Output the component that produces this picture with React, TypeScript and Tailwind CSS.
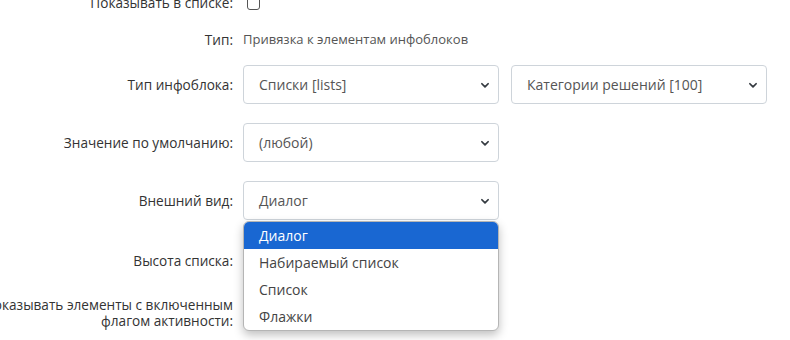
function Chevron() {
  return (
    <svg viewBox="0 0 16 16" className="h-[10px] w-[10px] shrink-0 text-[#343a40]" fill="none" stroke="currentColor" strokeWidth={2.8}>
      <path strokeLinecap="round" strokeLinejoin="round" d="M3 6l5 5 5-5" />
    </svg>
  )
}

function Select({ value }: { value: string }) {
  return (
    <div className="flex h-[39px] w-[256px] items-center justify-between rounded-[4px] border border-[#ced4da] bg-white pl-[15px] pr-[8px] text-[14px] text-[#555]">
      <span>{value}</span>
      <Chevron />
    </div>
  )
}

function Row({ label, children, className }: { label: React.ReactNode; children?: React.ReactNode; className?: string }) {
  return (
    <div className={`flex items-center gap-[10px] ${className ?? ''}`}>
      <div className="flex w-[233px] shrink-0 justify-end text-[13.6px] font-medium leading-[16px] text-[#333]">
        <span className="whitespace-nowrap text-right">{label}</span>
      </div>
      {children}
    </div>
  )
}

const options = ['Диалог', 'Набираемый список', 'Список', 'Флажки']

export default function App() {
  return (
    <div className="h-[340px] w-[790px] overflow-hidden bg-white font-['Open_Sans',sans-serif]">
      <div className="-mt-[7px] flex flex-col">
        <Row label="Показывать в списке:" className="h-[20px]">
          <div className="ml-[4px] h-[13px] w-[13px] rounded-[3px] border border-[#555] bg-white" />
        </Row>
        <Row label="Тип:" className="mt-[17px] h-[20px]">
          <span className="text-[13px] text-[#555]">Привязка к элементам инфоблоков</span>
        </Row>
        <Row label="Тип инфоблока:" className="mt-[15px]">
          <div className="flex gap-[12px]">
            <Select value="Списки [lists]" />
            <Select value="Категории решений [100]" />
          </div>
        </Row>
        <Row label="Значение по умолчанию:" className="mt-[19px]">
          <Select value="(любой)" />
        </Row>
        <Row label="Внешний вид:" className="mt-[19px]">
          <div className="relative">
            <Select value="Диалог" />
            <div className="absolute left-0 top-[40px] z-10 w-[256px] overflow-hidden rounded-[6px] border border-[#b5b5b5] bg-white shadow-[0_4px_10px_rgba(0,0,0,0.25)]">
              {options.map((o, i) => (
                <div
                  key={o}
                  className={`flex h-[27px] items-center pl-[15px] text-[14px] ${i === 0 ? 'bg-[#1967d2] text-white' : 'text-[#444]'}`}
                >
                  {o}
                </div>
              ))}
            </div>
          </div>
        </Row>
        <Row label="Высота списка:" className="mt-[21px]">
          <div className="h-[39px] w-[256px] rounded-[4px] border border-[#ced4da]" />
        </Row>
        <Row label={<>Показывать элементы с включенным<br />флагом активности:</>} className="mt-[17px]">
          <div className="h-[13px] w-[13px]" />
        </Row>
      </div>
    </div>
  )
}
